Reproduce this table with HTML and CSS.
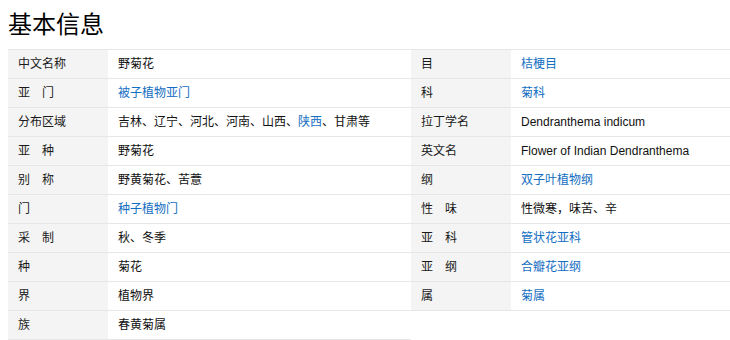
FILE: index.html
```html
<!DOCTYPE html>
<html lang="zh-CN">
<head>
<meta charset="utf-8">
<title>基本信息</title>
<link rel="stylesheet" href="styles.css">
</head>
<body>
<h2 class="title">基本信息</h2>
<div class="info">
  <dl class="col col-left">
    <div class="row"><dt>中文名称</dt><dd>野菊花</dd></div>
    <div class="row"><dt>亚　门</dt><dd><a href="#">被子植物亚门</a></dd></div>
    <div class="row"><dt>分布区域</dt><dd>吉林、辽宁、河北、河南、山西、<a href="#">陕西</a>、甘肃等</dd></div>
    <div class="row"><dt>亚　种</dt><dd>野菊花</dd></div>
    <div class="row"><dt>别　称</dt><dd>野黄菊花、苦薏</dd></div>
    <div class="row"><dt>门</dt><dd><a href="#">种子植物门</a></dd></div>
    <div class="row"><dt>采　制</dt><dd>秋、冬季</dd></div>
    <div class="row"><dt>种</dt><dd>菊花</dd></div>
    <div class="row"><dt>界</dt><dd>植物界</dd></div>
    <div class="row"><dt>族</dt><dd>春黄菊属</dd></div>
  </dl>
  <dl class="col col-right">
    <div class="row"><dt>目</dt><dd><a href="#">桔梗目</a></dd></div>
    <div class="row"><dt>科</dt><dd><a href="#">菊科</a></dd></div>
    <div class="row"><dt>拉丁学名</dt><dd>Dendranthema indicum</dd></div>
    <div class="row"><dt>英文名</dt><dd>Flower of Indian Dendranthema</dd></div>
    <div class="row"><dt>纲</dt><dd><a href="#">双子叶植物纲</a></dd></div>
    <div class="row"><dt>性　味</dt><dd>性微寒，味苦、辛</dd></div>
    <div class="row"><dt>亚　科</dt><dd><a href="#">管状花亚科</a></dd></div>
    <div class="row"><dt>亚　纲</dt><dd><a href="#">合瓣花亚纲</a></dd></div>
    <div class="row"><dt>属</dt><dd><a href="#">菊属</a></dd></div>
  </dl>
</div>
</body>
</html>
```
FILE: styles.css
```css
html, body {
  margin: 0;
  padding: 0;
  background: #fff;
  overflow: hidden;
}
body {
  padding: 9px 0 0 8px;
  font-family: "Liberation Sans", "Noto Sans CJK SC", sans-serif;
  color: #1a1a1a;
}
.title {
  margin: 0 0 12px;
  font-family: "Noto Sans CJK SC", sans-serif;
  font-size: 24px;
  font-weight: normal;
  line-height: 28px;
  color: #000;
}
.info {
  display: flex;
  align-items: flex-start;
  border-top: 1px solid #e6e6e6;
  width: 722px;
}
.col {
  margin: 0;
  display: flex;
  flex-direction: column;
}
.col-left { width: 403px; }
.col-right { width: 319px; }
.row {
  display: flex;
  height: 28px;
  border-bottom: 1px solid #e6e6e6;
  font-size: 12px;
  line-height: 28px;
}
dt {
  width: 90px;
  padding-left: 10px;
  background: #f4f4f4;
  color: #1a1a1a;
  white-space: nowrap;
}
dd {
  margin: 0;
  flex: 1;
  padding-left: 10px;
  white-space: nowrap;
  color: #111;
}
a {
  color: #136ec2;
  text-decoration: none;
}
```
